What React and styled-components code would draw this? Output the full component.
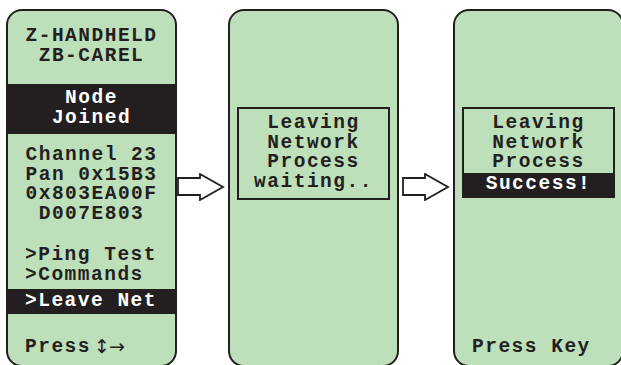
import styled, { createGlobalStyle } from "styled-components";

const GlobalStyle = createGlobalStyle`
    html, body {
        margin: 0;
        padding: 0;
        background: #ffffff;
        overflow: hidden;
    }
`;

const Page = styled.div`
    display: flex;
    align-items: flex-start;
    width: 621px;
    height: 365px;
    padding: 9px 0 0 6px;
    box-sizing: border-box;
    overflow: hidden;
    font-family: "Courier New", "Nimbus Mono PS", "FreeMono", "Liberation Mono", monospace;
    font-weight: bold;
    font-size: 19.5px;
    letter-spacing: 1.5px;
    color: #231f20;
`;

const Screen = styled.div`
    flex: none;
    display: flex;
    flex-direction: column;
    width: 171px;
    height: 358px;
    box-sizing: border-box;
    border: 2px solid #231f20;
    border-radius: 16px;
    background: #bddfba;
    overflow: hidden;
`;

const Line = styled.div`
    line-height: 19.5px;
    white-space: pre;
    text-align: ${(p) => (p.$left ? "left" : "center")};
    padding-left: ${(p) => (p.$left ? "17px" : "0")};
`;

const Block = styled.div`
    margin-top: ${(p) => p.$top || 0}px;
`;

const Band = styled.div`
    background: #231f20;
    color: #ffffff;
    margin-top: ${(p) => p.$top || 0}px;
    padding: ${(p) => p.$pad || "0"};
`;

const Footer = styled.div`
    margin-top: auto;
    padding-bottom: 8px;
`;

const Keys = styled.span`
    font-family: "DejaVu Sans", sans-serif;
    font-weight: normal;
    font-size: 19px;
    letter-spacing: -1px;
    margin-left: 3px;
    vertical-align: -1px;
`;

const MessageBox = styled.div`
    align-self: center;
    width: 153px;
    margin-top: 96px;
    box-sizing: border-box;
    border: 2px solid #231f20;
    padding: ${(p) => (p.$tight ? "5px 0 0" : "5px 0 6px")};
`;

const ArrowSlot = styled.div`
    flex: none;
    width: ${(p) => p.$width}px;
    padding-left: ${(p) => p.$lead}px;
    box-sizing: border-box;
    margin-top: 164px;
    display: flex;
`;

function Arrow({ width, lead }) {
    return (
        <ArrowSlot $width={width} $lead={lead}>
            <svg width="48" height="28" viewBox="0 0 48 28">
                <polygon
                    points="1,5 23,5 23,1 46,14 23,27 23,22 1,22"
                    fill="#ffffff"
                    stroke="#231f20"
                    strokeWidth="1.8"
                    strokeLinejoin="miter"
                />
            </svg>
        </ArrowSlot>
    );
}

export default function App() {
    return (
        <Page>
            <GlobalStyle />
            <Screen>
                <Block $top={16}>
                    <Line>Z-HANDHELD</Line>
                    <Line>ZB-CAREL</Line>
                </Block>
                <Band $top={18} $pad="5px 0 6px">
                    <Line>Node</Line>
                    <Line>Joined</Line>
                </Band>
                <Block $top={12}>
                    <Line>Channel 23</Line>
                    <Line>Pan 0x15B3</Line>
                    <Line>0x803EA00F</Line>
                    <Line>D007E803</Line>
                </Block>
                <Block $top={22}>
                    <Line $left>&gt;Ping Test</Line>
                    <Line $left>&gt;Commands</Line>
                </Block>
                <Band $top={4} $pad="3px 0 2px">
                    <Line $left>&gt;Leave Net</Line>
                </Band>
                <Footer>
                    <Line $left>
                        Press<Keys>↕→</Keys>
                    </Line>
                </Footer>
            </Screen>
            <Arrow width={51} lead={0} />
            <Screen>
                <MessageBox>
                    <Line>Leaving</Line>
                    <Line>Network</Line>
                    <Line>Process</Line>
                    <Line>waiting..</Line>
                </MessageBox>
            </Screen>
            <Arrow width={54} lead={3} />
            <Screen>
                <MessageBox $tight>
                    <Line>Leaving</Line>
                    <Line>Network</Line>
                    <Line>Process</Line>
                    <Band $pad="2px 0 2px">
                        <Line>Success!</Line>
                    </Band>
                </MessageBox>
                <Footer>
                    <Line $left>Press Key</Line>
                </Footer>
            </Screen>
        </Page>
    );
}
